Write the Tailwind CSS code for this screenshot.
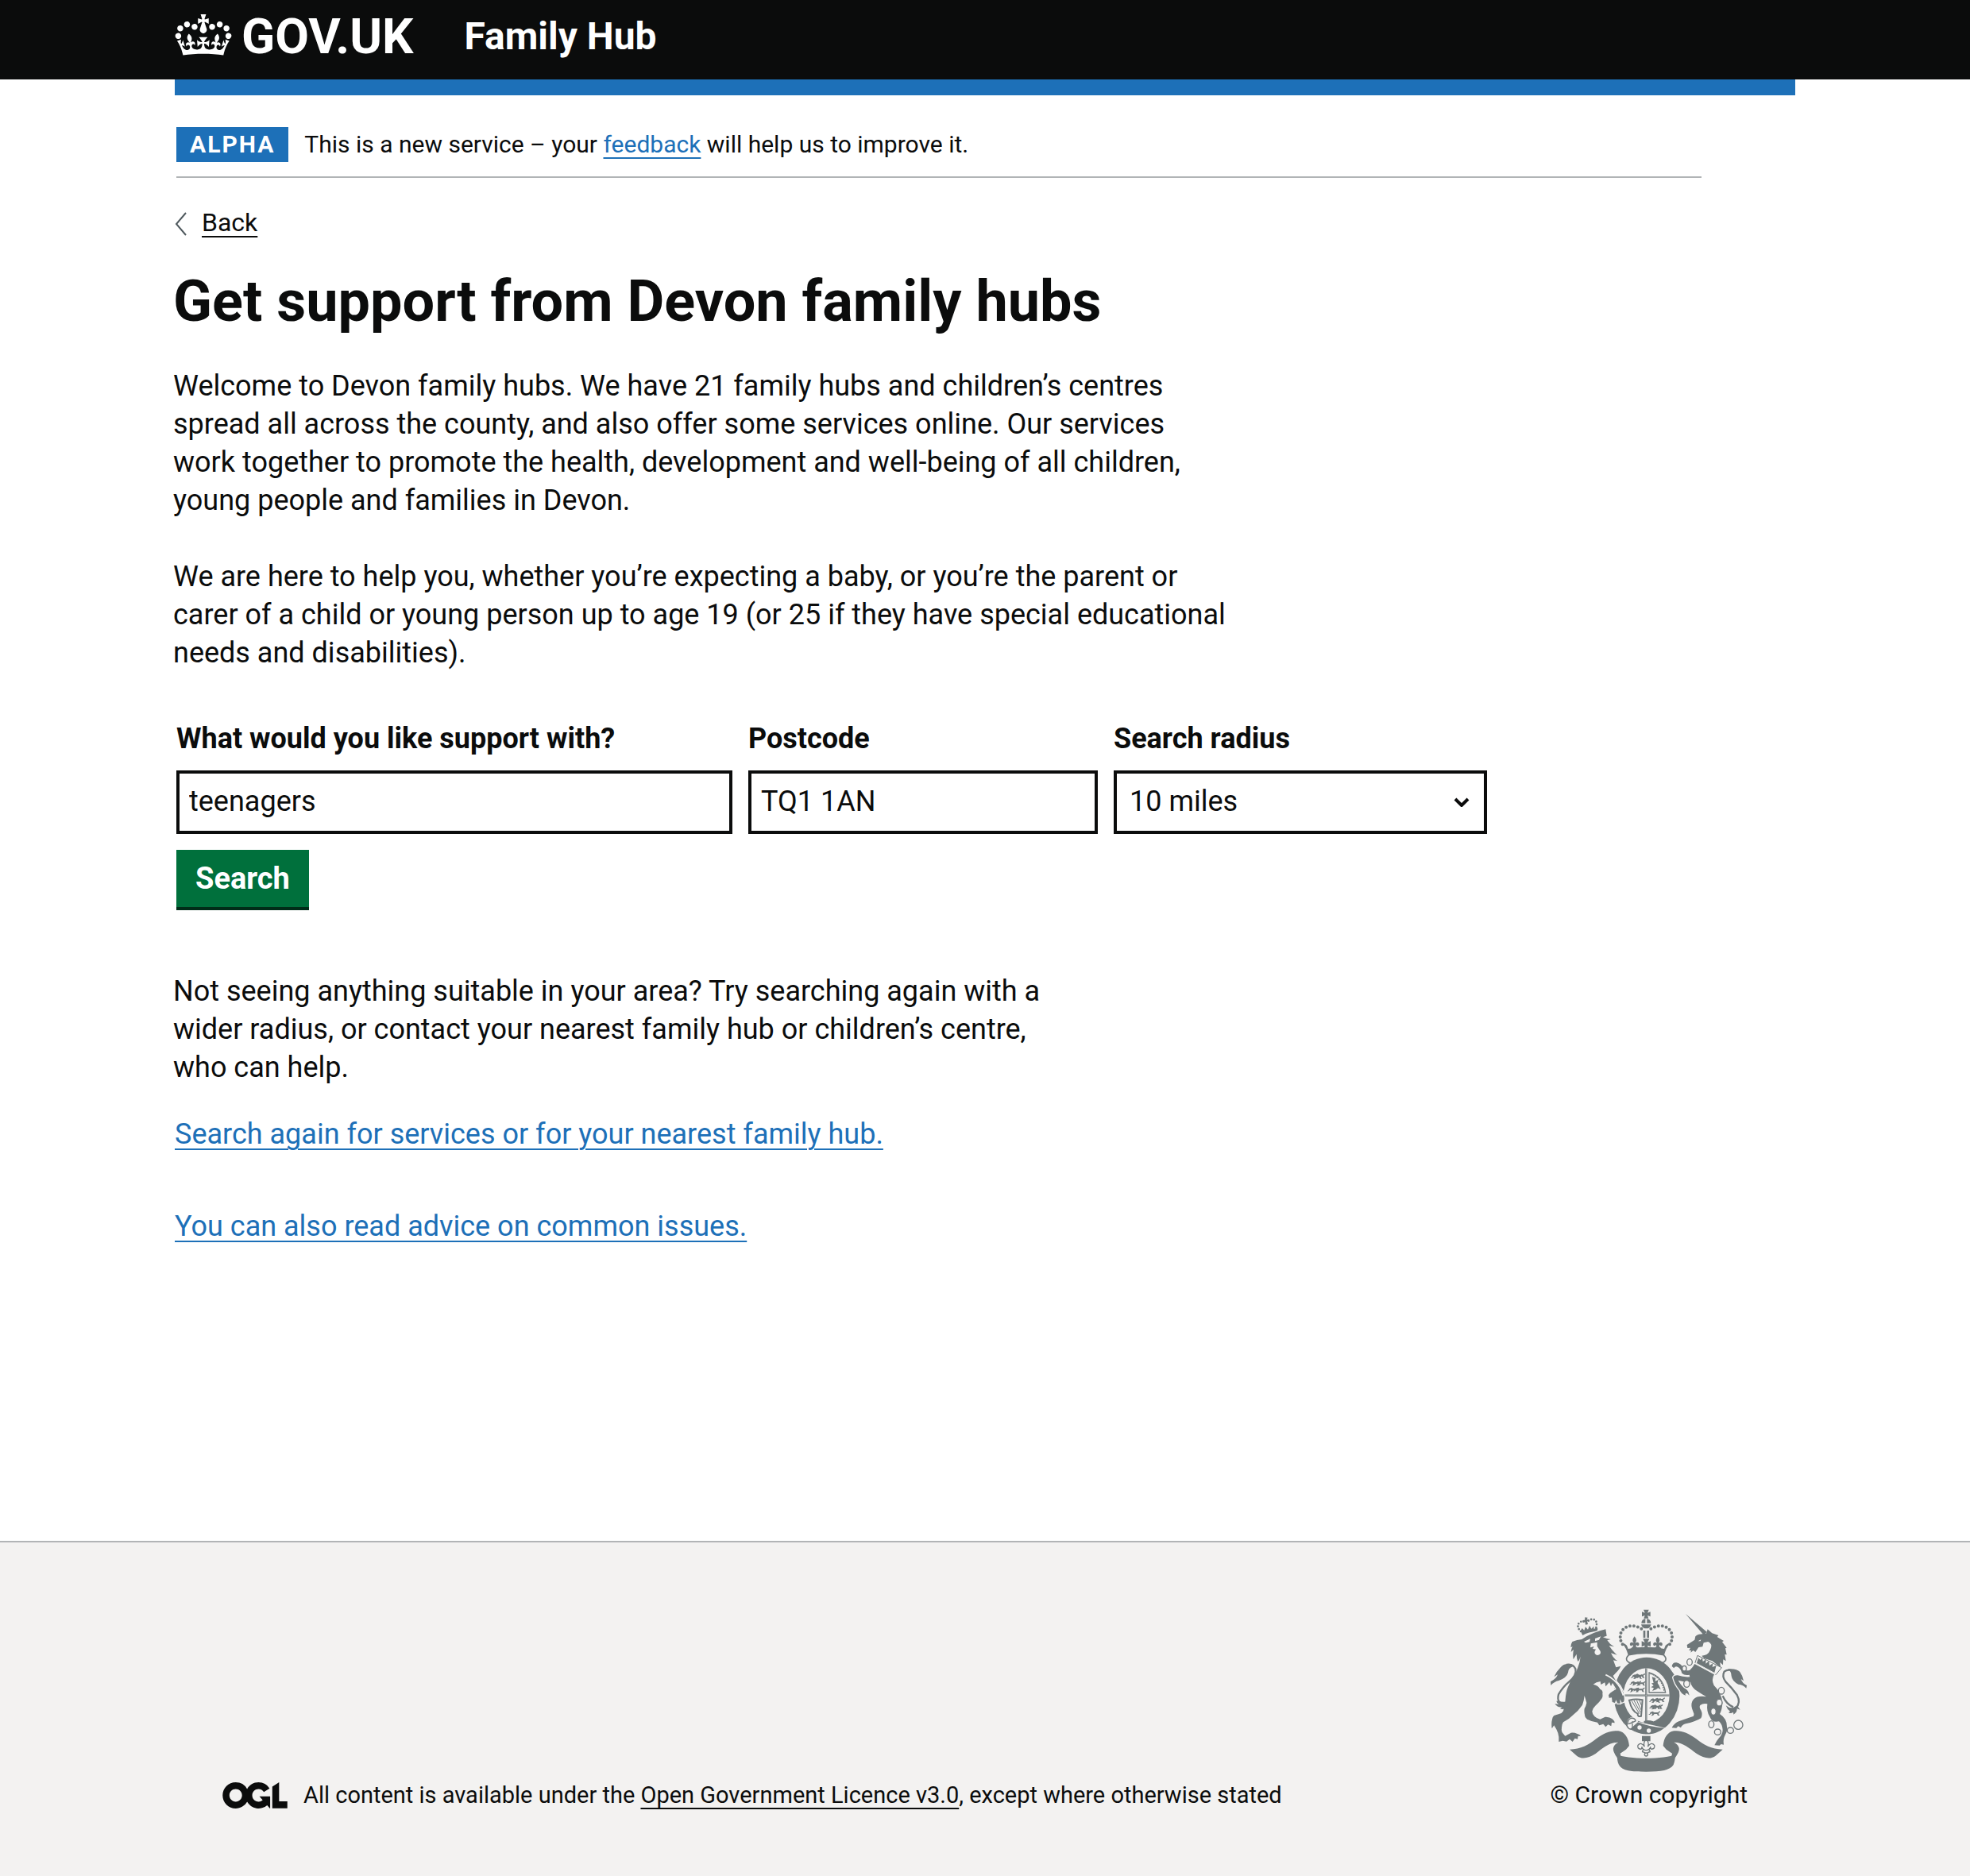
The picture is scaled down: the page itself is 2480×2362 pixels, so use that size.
<!DOCTYPE html>
<html lang="en">
<head>
<meta charset="utf-8">
<meta name="viewport" content="width=device-width, initial-scale=1">
<title>Get support from Devon family hubs - Family Hub - GOV.UK</title>
<script src="https://cdn.jsdelivr.net/npm/@tailwindcss/browser@4"></script>
</head>
<body class="flex min-h-screen flex-col bg-white font-[Roboto,Arial,sans-serif] text-[36px] leading-12 text-[#0b0c0c]">

<header class="bg-[#0b0c0c] text-white">
  <div class="mx-[220px] flex h-[100px] items-start">
    <a href="#" class="flex items-start gap-3">
      <svg class="mt-[18px] h-[52px] w-[72px]" viewBox="0 0 132 97" fill="currentColor" aria-hidden="true"><path fill-rule="evenodd" d="M25 30.2c3.5 1.5 7.7-.2 9.1-3.7 1.5-3.6-.2-7.8-3.9-9.2-3.6-1.4-7.6.3-9.1 3.9-1.4 3.5.3 7.5 3.9 9zM9 39.5c3.6 1.5 7.8-.2 9.2-3.7 1.5-3.6-.2-7.8-3.9-9.1-3.6-1.5-7.6.2-9.1 3.8-1.4 3.5.3 7.5 3.8 9zM4.4 57.2c3.5 1.5 7.7-.2 9.1-3.8 1.5-3.6-.2-7.7-3.9-9.1-3.5-1.5-7.6.3-9.1 3.8-1.4 3.5.3 7.6 3.9 9.1zm38.3-21.4c3.5 1.5 7.7-.2 9.1-3.8 1.5-3.6-.2-7.7-3.9-9.1-3.6-1.5-7.6.3-9.1 3.8-1.3 3.6.4 7.7 3.9 9.1zm64.4-5.6c-3.6 1.5-7.8-.2-9.1-3.7-1.5-3.6.2-7.8 3.8-9.2 3.6-1.4 7.7.3 9.2 3.9 1.3 3.5-.4 7.5-3.9 9zm15.9 9.3c-3.6 1.5-7.7-.2-9.1-3.7-1.5-3.6.2-7.8 3.7-9.1 3.6-1.5 7.7.2 9.2 3.8 1.5 3.5-.3 7.5-3.8 9zm4.7 17.7c-3.6 1.5-7.8-.2-9.2-3.8-1.5-3.6.2-7.7 3.9-9.1 3.6-1.5 7.7.3 9.2 3.8 1.3 3.5-.4 7.6-3.9 9.1zM89.3 35.8c-3.6 1.5-7.8-.2-9.2-3.8-1.4-3.6.2-7.7 3.9-9.1 3.6-1.5 7.7.3 9.2 3.8 1.4 3.6-.3 7.7-3.9 9.1zM69.7 17.7l8.9 4.7V9.3l-8.9 2.8c-.2-.3-.5-.6-.9-.9L72.4 0H59.6l3.5 11.2c-.3.3-.6.5-.9.9l-8.8-2.8v13.1l8.8-4.7c.3.3.6.7.9.9l-5 15.4v.1c-.2.8-.4 1.6-.4 2.4 0 4.1 3.1 7.5 7 8.1h.2c.3 0 .7.1 1 .1.4 0 .7 0 1-.1h.2c4-.6 7.1-4.1 7.1-8.1 0-.8-.1-1.7-.4-2.4V34l-5.1-15.4c.4-.2.7-.6 1-.9zM66 92.8c16.9 0 32.8 1.1 47.1 3.2 4-16.9 8.9-26.7 14-33.5l-9.6-3.4c1 4.9 1.1 7.2 0 10.2-1.5-1.4-3-4.3-4.2-8.7L108.6 76c2.8-2 5-3.2 7.5-3.3-4.4 9.4-10 11.9-13.6 11.2-4.3-.8-6.3-4.6-5.6-7.9 1-4.7 5.7-5.9 8-.5 4.3-8.7-3-11.4-7.6-8.8 7.1-7.2 7.9-13.5 2.1-21.1-8 6.1-8.1 12.3-4.5 20.8-4.7-5.4-12.1-2.5-9.5 6.2 3.4-5.2 7.9-2 7.2 3.1-.6 4.3-6.4 7.8-13.5 7.2-10.3-.9-10.9-8-11.2-13.8 2.5-.5 7.1 1.8 11 7.3L80.2 60c-4.1 4.4-8 5.3-12.3 5.4 1.4-4.4 8-11.6 8-11.6H55.5s6.4 7.2 7.9 11.6c-4.2-.1-8-1-12.3-5.4l1.4 16.4c3.9-5.5 8.5-7.7 10.9-7.3-.3 5.8-.9 12.8-11.1 13.8-7.2.6-12.9-2.9-13.5-7.2-.7-5 3.8-8.3 7.1-3.1 2.7-8.7-4.6-11.6-9.4-6.2 3.7-8.5 3.6-14.7-4.6-20.8-5.8 7.6-5 13.9 2.2 21.1-4.7-2.6-11.9.1-7.7 8.8 2.3-5.5 7.1-4.2 8.1.5.7 3.3-1.3 7.1-5.7 7.9-3.5.7-9-1.8-13.5-11.2 2.5.1 4.7 1.3 7.5 3.3l-4.7-15.4c-1.2 4.4-2.7 7.2-4.3 8.7-1.1-3-.9-5.3 0-10.2l-9.5 3.4c5 6.9 9.9 16.7 14 33.5 14.8-2.1 30.8-3.2 47.7-3.2z"/></svg>
      <span class="mt-4 text-[62px] leading-[60px] font-bold">GOV.UK</span>
    </a>
    <a href="#" class="ml-16 mt-4 text-[48px] leading-[60px] font-bold">Family Hub</a>
  </div>
</header>
<div class="mx-[220px] h-5 bg-[#1d70b8]"></div>

<main class="mx-[218px] flex-1 pb-[352px]">
  <div class="ml-1 mr-[120px] mt-10 flex items-start gap-5 border-b-2 border-[#b1b4b6] pb-[18px] text-[30px] leading-11">
    <strong class="bg-[#1d70b8] px-[17px] tracking-[2px] text-white">ALPHA</strong>
    <p>This is a new service – your <a href="#" class="text-[#1d70b8] underline decoration-2 underline-offset-6">feedback</a> will help us to improve it.</p>
  </div>

  <a href="#" class="mt-[34px] flex w-fit items-center gap-[18px] text-[32px] leading-11">
    <svg class="ml-[2px] mt-1 h-[30px] w-4" viewBox="0 0 16 30" fill="none" stroke="#505a5f" stroke-width="2" aria-hidden="true"><path d="M14 1 2 15l12 14"/></svg>
    <span class="underline decoration-2 underline-offset-6">Back</span>
  </a>

  <h1 class="mt-[38px] text-[72px] leading-20 font-bold">Get support from Devon family hubs</h1>

  <p class="mt-[42px] max-w-[1332px]">Welcome to Devon family hubs. We have 21 family hubs and children’s centres spread all across the county, and also offer some services online. Our services work together to promote the health, development and well-being of all children, young people and families in Devon.</p>
  <p class="mt-12 max-w-[1332px]">We are here to help you, whether you’re expecting a baby, or you’re the parent or carer of a child or young person up to age 19 (or 25 if they have special educational needs and disabilities).</p>

  <form class="ml-1 mt-[60px]" onsubmit="return false">
    <div class="flex gap-5">
      <div class="flex w-[700px] flex-col gap-4">
        <label for="topic" class="font-bold">What would you like support with?</label>
        <input id="topic" type="text" value="teenagers" class="h-20 w-full border-4 border-[#0b0c0c] px-3 pb-[3px]">
      </div>
      <div class="flex w-[440px] flex-col gap-4">
        <label for="postcode" class="font-bold">Postcode</label>
        <input id="postcode" type="text" value="TQ1 1AN" class="h-20 w-full border-4 border-[#0b0c0c] px-3 pb-[3px]">
      </div>
      <div class="flex w-[470px] flex-col gap-4">
        <label for="radius" class="font-bold">Search radius</label>
        <div class="relative">
          <select id="radius" class="block h-20 w-full appearance-none border-4 border-[#0b0c0c] px-4 pb-[3px]"><option>10 miles</option></select>
          <svg class="pointer-events-none absolute right-[22px] top-[34px] h-3 w-5" viewBox="0 0 20 12" fill="none" stroke="#0b0c0c" stroke-width="4" aria-hidden="true"><path d="M2 2l8 8 8-8"/></svg>
        </div>
      </div>
    </div>
    <button type="submit" class="mt-5 block h-[76px] border-b-4 border-[#002d18] bg-[#00703c] px-6 text-[38px] font-bold text-white">Search</button>
  </form>

  <p class="mt-[78px] max-w-[1120px]">Not seeing anything suitable in your area? Try searching again with a wider radius, or contact your nearest family hub or children’s centre, who can help.</p>
  <p class="ml-[2px] mt-9"><a href="#" class="text-[#1d70b8] underline decoration-2 underline-offset-6">Search again for services or for your nearest family hub.</a></p>
  <p class="ml-[2px] mt-[68px]"><a href="#" class="text-[#1d70b8] underline decoration-2 underline-offset-6">You can also read advice on common issues.</a></p>
</main>

<footer class="border-t-2 border-[#b1b4b6] bg-[#f3f2f1] px-[280px] pt-[84px] pb-[82px] text-[30px] leading-10">
  <div class="flex items-end justify-between">
    <div class="flex items-center gap-5 text-[29px]">
      <svg class="h-[33px] w-[82px]" viewBox="0 0 483.2 195.7" fill="#0b0c0c" aria-hidden="true"><path d="M421.5 142.8V.1l-50.7 32.3v161.1h112.4v-50.7zm-122.3-9.6A47.12 47.12 0 0 1 221 97.8c0-26 21.1-47.1 47.1-47.1 16.7 0 31.4 8.7 39.7 21.8l42.7-27.2A97.63 97.63 0 0 0 268.1 0c-36.5 0-68.3 20.1-85.1 49.7A98 98 0 0 0 97.8 0C43.9 0 0 43.9 0 97.8s43.9 97.8 97.8 97.8c36.5 0 68.3-20.1 85.1-49.7a97.76 97.76 0 0 0 149.6 25.4l19.4 22.2h3v-87.8h-80l24.3 27.5zM97.8 145c-26 0-47.1-21.1-47.1-47.1s21.1-47.1 47.1-47.1 47.1 21.1 47.1 47.1S123.8 145 97.8 145"/></svg>
      <p>All content is available under the <a href="#" class="underline decoration-2 underline-offset-6">Open Government Licence v3.0</a>, except where otherwise stated</p>
    </div>
    <a href="#" class="flex flex-col items-center gap-2">
      <svg class="h-[206px] w-[248px]" viewBox="96 76 744 618" fill="#6f7779" aria-hidden="true">
        <defs>
          <path id="ribbon" d="M168 606C210 606 240 588 268 566 298 543 325 533 352 536 377 540 390 563 393 592L381 606 359 621 362 636 350 640C338 625 329 608 334 597 338 587 345 583 352 579 320 578 295 600 266 622 240 640 212 644 195 630Z"/>
          <path id="fleur" d="M0-24C-9-12-8-7-3 1-11-5-20 0-17 9-14 14-9 12-8 8-4 10-4 15-10 18L-14 24H14L10 18C4 15 4 10 8 8 9 12 14 14 17 9 20 0 11-5 3 1 8-7 9-12 0-24Z"/>
          <path id="passant" d="M2 3l7-3 7 4 13 0 5-4 4-1-1 5-5 2 1 7 4 3h-8l-3-6-10 0-5 6-8 1 5-5-2-5-7 6-6 0 6-4 1-4z"/>
        </defs>
        <!-- Ribbon -->
        <use href="#ribbon"/>
        <use href="#ribbon" transform="translate(914 0) scale(-1 1)"/>
        <path d="M346 624C382 644 532 644 568 624 566 640 565 652 560 664 546 685 515 690 457 690 400 690 368 688 354 664 348 652 348 640 346 624Z"/>
        <!-- Crown above the shield -->
        <path d="M447 78h20l-5 12 11-4v18l-11-4 4 11h-18l4-11-11 4V86l11 4zM439 129a18 18 0 0 1 15-17v17zM460 112a18 18 0 0 1 15 17h-15zM438 134h38q-4 13-13 15h-11q-10-2-14-15zM446 157h8v27h-8zM460 157h8v27h-8z"/>
        <g fill="none" stroke="#6f7779" stroke-width="12" stroke-linecap="round" stroke-dasharray="0 15">
          <path d="M439 150C405 130 375 140 363 162 355 182 360 198 370 212"/>
          <path d="M475 150C509 130 539 140 551 162 559 182 554 198 544 212"/>
        </g>
        <path d="M366 204q12 1 18 9l5 13q68-14 136 0l5-13q6-8 18-9-16 18-23 45-68-14-136 0-7-27-23-45zM445 188h24l-7 14 12-5v21l-12-5 4 14h-18l4-14-12 5v-21l12 5z"/>
        <use href="#fleur" x="413" y="203"/><use href="#fleur" x="501" y="203"/>
        <path d="M391 249q-16 17-2 26 3 3 12 5M523 249q16 17 2 26-3 3-12 5M391 249q66-14 132 0" fill="none" stroke="#6f7779" stroke-width="5"/>
        <!-- Garter and shield -->
        <ellipse cx="459" cy="403" rx="124" ry="145"/>
        <ellipse cx="458" cy="402" rx="87" ry="103" fill="#f3f2f1"/>
        <path d="M457 299v204M371 402h174" stroke="#6f7779" stroke-width="7"/>
        <path d="M457 299v204M371 402h174" stroke="#f3f2f1" stroke-width="1"/>
        <use href="#passant" x="405" y="323"/><use href="#passant" x="400" y="348"/><use href="#passant" x="392" y="373"/>
        <use href="#passant" x="417" y="349"/><use href="#passant" x="414" y="373"/><use href="#passant" x="415" y="320"/>
        <use href="#passant" x="474" y="413"/><use href="#passant" x="474" y="438"/><use href="#passant" x="472" y="462"/>
        <use href="#passant" x="490" y="411"/><use href="#passant" x="482" y="437"/>
        <path d="M468 314v77h64M468 316q52 14 62 75" fill="none" stroke="#6f7779" stroke-width="4"/>
        <path d="M473 320q42 14 52 67" fill="none" stroke="#6f7779" stroke-width="4" stroke-dasharray="5 4"/>
        <path d="M479 332l14 4-2 12 12-5-3 12 6 10 6 15-10-6-8 6-14 5 6-11-11-3 10-6-8-9 8-1z"/>
        <g fill="none" stroke="#6f7779" stroke-width="3"><path stroke-width="6" d="M393 420q25-7 50-1l-5 61q-14 4-13-9-22-9-32-51z"/><path d="M402 422l29 49M411 421l24 45M421 420l16 36M431 419l8 20"/></g>
        <path d="M385 507q0-23 22-23 19 2 19 17l105 24-24 17q-48 12-98-9-24-5-24-26z" fill="#f3f2f1"/>
        <path d="M426 503q48 20 100 22-30 24-71 23-32-4-58-20z"/>
        <g fill="none" stroke="#6f7779" stroke-width="4"><path d="M418 498q-5-12-17-10-12 3-13 15-10 13 5 25 10 4 15-2M388 510q14-3 30-12M405 500v24"/></g>
        <circle cx="432" cy="523" r="8" fill="#f3f2f1"/><circle cx="467" cy="535" r="8" fill="#f3f2f1"/>
        <path d="M448 499q16-6 36 1l-8 12-26-6zM441 555h32v20h-32z"/>
        <path d="M457 568q-13 13-6 27-14-19-25-5-4 13 11 15 6-4 3-9 4 12 15 13h4q11-1 15-13-3 5 3 9 15-2 11-15-11-14-25 5 7-14-6-27zM446 608q-8 8 2 8l7 5h5l7-5q9 0 1-8" fill="#f3f2f1" stroke="#6f7779" stroke-width="4"/>
        <circle cx="457" cy="625" r="6" fill="#f3f2f1" stroke="#6f7779" stroke-width="4"/>
        <!-- Lion -->
        <g fill="none" stroke="#6f7779" stroke-width="8" stroke-linecap="round" stroke-dasharray="0 11"><path d="M210 160q-17-17-7-31 12-12 23-4M268 145q6-21-6-29-14-5-24 5"/></g>
        <path d="M226 107l10 1-3 8 8-2 1 9-8-1 3 11-9 2-2-11-8 3-1-9 8-1zM209 158l6-10 8 8 5-13 9 10 6-15 7 12 9-9 1 11 10-8 4 6-2 10q-34 1-55 15z"/>
        <path stroke="#f3f2f1" stroke-width="8" paint-order="stroke" d="M196 193l18-3q40-27 90-38l4 25-14 5q14 6 29 8l-13 4q10 16 26 24l-19-4q12 20 30 35l-23-7q8 20 25 30l-16-3 10 27 18-5q-4 11-12 19l-17 18 14 25q14 12 20 29 8 10 7 24 3 12-1 20l-7 3-7-13 1 16-10 0-6-13-4 11-10-3-2-17-10 1-2-10q5-9 13-13l16-10-14-23-6 12-6-15-14 16-3-15-15 8-2-12q-16 2-27 11 20 5 26 18 12 5 9 18 2 9-2 17-10 16-25 28-10 9-12 21 1 12 9 19 9 9 21 11l19-9q17-1 27 8 8 6 9 15l-11-2-2 14-12-6-9 9-9-11-15 5-7-11q-22-3-39-12-10-7-9-17-3-12-1-23 6-10 8-22-4-15-8-27-2 20-8 35-15 22-35 38-16 17-37 27-7 10-6 23-2 10 3 17l10 12 22-12q14-1 24 4 9 2 13 9l-10-1-2 12-10-3-9 13-11-10-12 9-14-3-15 4 0-18q-2-16-9-29l-9-15-8 12q-3-20 1-35 1-9 7-14l19-6q12-3 16-11 8-28 9-56 3-26 13-44 4-15 13-25 13-17 19-37 9-20 11-44-3 13-10 19-5-13-5-28l-12 20q-3-20 1-37l-10 9q1-12 6-20l-7 2q1-14 6-21z"/>
        <path d="M222 199l24-11-3 12-14 3zM264 187l22-8-7 13-15 5zM248 206l24-5 0 15 12 19q3 8-4 13-10 5-16-3-5-9 4-17l-13-2 5-9-14 4z" fill="#f3f2f1"/>
        <path d="M304 324q35 15 56 50l11 28" fill="none" stroke="#f3f2f1" stroke-width="6"/>
        <path d="M158 435Q116 436 126 398 142 370 166 350 196 326 190 302 180 281 156 286" fill="none" stroke="#6f7779" stroke-width="7"/>
        <path d="M175 284q-29-5-41 12-18 18-25 36l14-9q-5 16-27 27l1 14q12-14 30-18 31-12 35-31 1-16 18-22zM126 422q14 9 51 0-8 15-23 20l11 2q-17 14-33 8l8-6q-17 3-28-12l15 1q-7-2-9-12z"/>
        <!-- Unicorn -->
        <path d="M606 94l80 68-11 13zM684 168l5-16 17 15 24 8-5 6 25 15-6 4 17 22-5 2 5 24-7-1 4 25-10-6-1 21-11-10 2 20-31-25-31-10-9-10q12-1 19-5 9-6 13-17 5-8 4-19-4-9-12-12l-17 4-4 15-15 2-12 18-8-6-10 8 2-8-8 0 5-10-11 1-2-12 29-19 3-13q5-6 13-8z"/>
        <path d="M653 197l11-6-2 6z" fill="#f3f2f1"/>
        <path d="M651 251l91 46-22 27-79-43z" fill="#f3f2f1" stroke="#6f7779" stroke-width="3"/>
        <path d="M648 280l6-20 8 8 7-8 2 14 12-8-1 16 12-10 2 17 13-8-2 14 15-7-7 28z"/>
        <path stroke="#f3f2f1" stroke-width="8" paint-order="stroke" d="M640 283L714 323Q702 342 713 364 742 392 745 430 744 455 735 472 763 490 762 520 766 532 756 550 746 568 750 588L740 586 734 591 715 590Q722 574 732 563 746 548 746 532 744 510 732 500 706 506 698 484 684 464 688 434 672 430 661 439 656 446 664 458 672 474 664 488 642 502 606 509 592 513 588 524L578 518 571 525 554 524Q564 506 580 500 606 490 636 480 640 472 634 462 624 440 631 424 640 408 658 406 672 404 684 407 668 398 650 386 628 372 624 351 604 352 578 345 586 360 600 374 618 382 620 402L611 393 604 396 607 402Q590 398 584 382 564 358 559 334 562 325 576 326 600 334 622 332L620 324Q602 328 592 318 588 300 576 294 566 290 562 299L554 292Q556 276 572 278 590 282 598 300 606 312 622 306 632 298 640 283Z"/>
        <g fill="#f3f2f1" stroke="#6f7779" stroke-width="4"><ellipse cx="621" cy="276" rx="10" ry="12"/><ellipse cx="601" cy="300" rx="8" ry="10"/><ellipse cx="610" cy="358" rx="11" ry="13"/><ellipse cx="741" cy="384" rx="11" ry="13"/><ellipse cx="733" cy="429" rx="11" ry="13"/><ellipse cx="711" cy="463" rx="10" ry="13"/><ellipse cx="703" cy="511" rx="10" ry="13"/><ellipse cx="727" cy="540" rx="12" ry="11"/><ellipse cx="775" cy="534" rx="12" ry="11"/><circle cx="805" cy="513" r="17"/></g>
        <path d="M786 446Q760 436 746 404M795 450Q816 430 800 400 780 372 757 350 742 330 752 312 764 302 784 308" fill="none" stroke="#6f7779" stroke-width="7"/>
        <path d="M765 302q34-3 46 11 11 15 14 34l-10-7q5 16 22 24l-2 11q-11-13-30-15-23-11-26-31 0-18-14-27zM758 440q14 12 28 8l14-8 12 16-12-4q1 14-13 22l-1-9q-10 7-18 2l6-5q-11-7-16-22z"/>
      </svg>
      <span>© Crown copyright</span>
    </a>
  </div>
</footer>
</body>
</html>
